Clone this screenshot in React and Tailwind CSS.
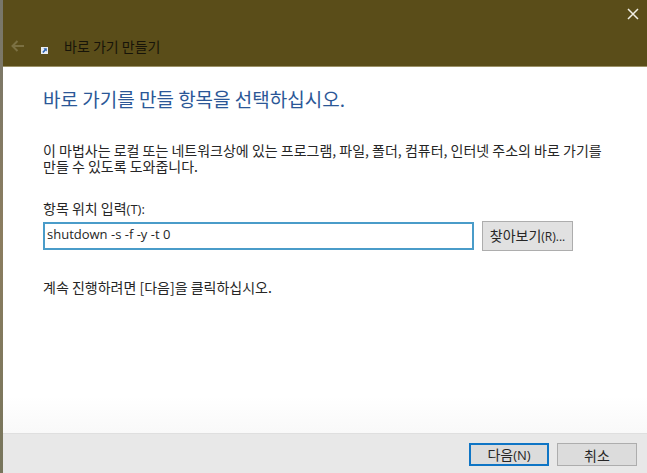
import { useState } from "react";

const ArrowLeft = () => (
    <svg className="h-3 w-3.5" viewBox="0 0 14 12" fill="none" stroke="currentColor" strokeWidth="2">
        <path d="M13 6H1.5M6.5 1L1.5 6l5 5" />
    </svg>
);

const ShortcutIcon = () => (
    <svg className="h-[7px] w-[7px]" viewBox="0 0 7 7">
        <rect width="7" height="7" fill="#e9edf3" />
        <path d="M2.4 1.2h3.4v3.4L4.7 3.5 2.6 6 1.2 5l2.3-2.6z" fill="#2c62b0" />
    </svg>
);

const CloseIcon = () => (
    <svg className="h-3 w-3" viewBox="0 0 12 12" fill="none" stroke="currentColor" strokeWidth="1.5">
        <path d="M1 1l10 10M11 1L1 11" />
    </svg>
);

const App = () => {
    const [location, setLocation] = useState("shutdown -s -f -y -t 0");

    return (
        <div className="flex min-h-screen bg-white font-['Noto_Sans_CJK_KR',sans-serif] text-sm text-[#262626]">
            <div className="w-[3px] shrink-0 bg-linear-to-b from-[#77766a] via-[#8b7d5f] to-[#77755c]" />
            <div className="flex min-w-0 flex-1 flex-col">
                <header className="border-b border-[#9c9268] bg-[#5a4d19] pb-2">
                    <div className="flex h-7 justify-end pr-2">
                        <button type="button" aria-label="닫기" className="text-[#f0eee4]">
                            <CloseIcon />
                        </button>
                    </div>
                    <div className="flex h-[30px] items-center pt-1.5 pl-2">
                        <button type="button" aria-label="뒤로" disabled className="text-[#7b7042]">
                            <ArrowLeft />
                        </button>
                        <span className="mt-2 ml-4">
                            <ShortcutIcon />
                        </span>
                        <h1 className="ml-4 text-sm text-[#171409]">바로 가기 만들기</h1>
                    </div>
                </header>

                <main className="flex-1 bg-linear-to-b from-white from-90% to-[#f9f9f9] px-10 pt-5">
                    <h2 className="text-[19px] leading-6 text-[#2b5797]">바로 가기를 만들 항목을 선택하십시오.</h2>
                    <p className="mt-[31px] leading-4">
                        이 마법사는 로컬 또는 네트워크상에 있는 프로그램, 파일, 폴더, 컴퓨터, 인터넷 주소의 바로 가기를 만들 수 있도록 도와줍니다.
                    </p>
                    <label htmlFor="location" className="mt-6 block leading-5">
                        항목 위치 입력<span className="font-['Open_Sans',sans-serif] text-[13px]">(T):</span>
                    </label>
                    <div className="mt-0.5 flex items-center gap-2 pr-[34px]">
                        <input
                            id="location"
                            type="text"
                            value={location}
                            onChange={(e) => setLocation(e.target.value)}
                            className="h-7 min-w-0 flex-1 border-2 border-[#4a9cc9] bg-white px-0.5 pb-1 font-['Open_Sans',sans-serif] text-[13px] outline-none"
                        />
                        <button type="button" className="h-[30px] w-[91px] border border-[#adadad] bg-[#e1e1e1] pb-0.5 whitespace-nowrap">
                            찾아보기<span className="font-['Open_Sans',sans-serif] text-xs">(R)...</span>
                        </button>
                    </div>
                    <p className="mt-[26px] leading-5">계속 진행하려면 [다음]을 클릭하십시오.</p>
                </main>

                <footer className="flex justify-end gap-2 border-t border-[#dfdfdf] bg-[#e8e8e8] px-2.5 pt-[9px] pb-[7px]">
                    <button type="button" className="h-[23px] w-20 border-2 border-[#0f75c5] bg-[#dcdcdc] leading-4">
                        다음<span className="font-['Open_Sans',sans-serif] text-[13px]">(N)</span>
                    </button>
                    <button type="button" className="h-[23px] w-20 border border-[#adadad] bg-[#dcdcdc] leading-4">
                        취소
                    </button>
                </footer>
            </div>
        </div>
    );
};

export default App;
